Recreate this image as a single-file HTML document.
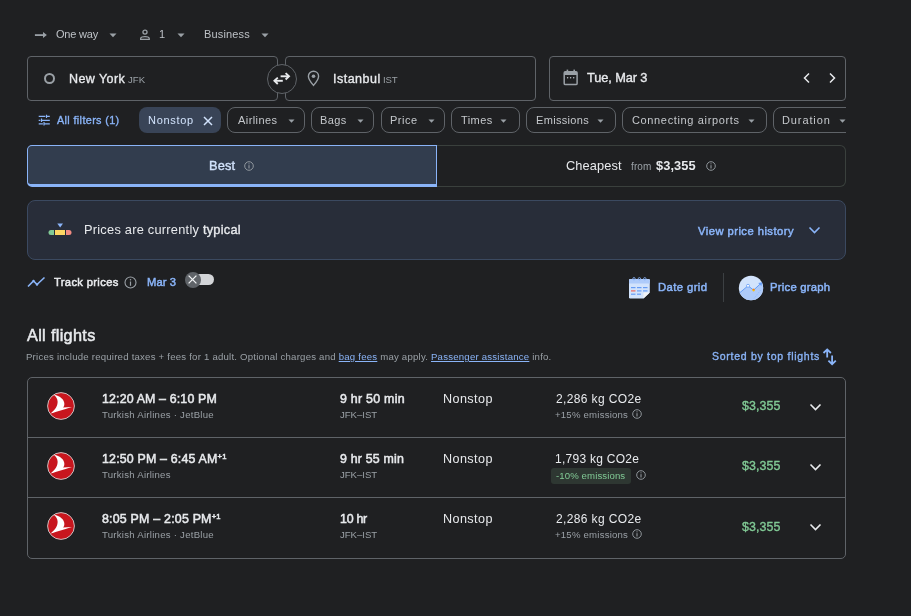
<!DOCTYPE html>
<html><head><meta charset="utf-8"><style>
html,body{margin:0;padding:0;background:#1f2022;width:911px;height:616px;overflow:hidden;}
body{position:relative;font-family:"Liberation Sans",sans-serif;}
.t{position:absolute;line-height:1;white-space:nowrap;will-change:transform;}
.b{position:absolute;}
b{font-weight:700;} .m{font-weight:400;-webkit-text-stroke:0.35px #e8eaed;}
.lk{color:#8ab4f8;text-decoration:underline;text-underline-offset:1px;}
.sp{font-size:0.62em;vertical-align:0;position:relative;top:-0.55em;}
</style></head><body>
<svg class="b" style="left:33px;top:30px" width="16" height="10" viewBox="0 0 16 10"><path d="M1.9 5.1H10.8" stroke="#9aa0a6" stroke-width="1.8"/><path d="M10 2.1L13.9 5.05L10 8Z" fill="#9aa0a6"/></svg>
<div class="t" style="left:55.70px;top:29px;font-size:11px;color:#bdc1c6;letter-spacing:-0.200px;">One way</div>
<svg class="b" style="left:109px;top:33px" width="8" height="5"><path d="M0.5 0.5H7.5L4 4.2Z" fill="#9aa0a6"/></svg>
<svg class="b" style="left:138px;top:28px" width="13" height="13" viewBox="0 0 13 13"><circle cx="7" cy="4.1" r="2.05" fill="none" stroke="#9aa0a6" stroke-width="1.3"/><path d="M2.65 11.45V10.5C2.65 9.3 5 8.65 6.95 8.65C8.9 8.65 11.25 9.3 11.25 10.5V11.45Z" fill="none" stroke="#9aa0a6" stroke-width="1.3"/></svg>
<div class="t" style="left:159.40px;top:29px;font-size:11px;color:#bdc1c6;">1</div>
<svg class="b" style="left:177px;top:33px" width="8" height="5"><path d="M0.5 0.5H7.5L4 4.2Z" fill="#9aa0a6"/></svg>
<div class="t" style="left:203.90px;top:29px;font-size:11px;color:#bdc1c6;letter-spacing:0.157px;">Business</div>
<svg class="b" style="left:261px;top:33px" width="8" height="5"><path d="M0.5 0.5H7.5L4 4.2Z" fill="#9aa0a6"/></svg>
<div class="b" style="left:27px;top:56px;width:251px;height:45px;border:1px solid #5f6368;border-radius:4px;box-sizing:border-box;"></div>
<div class="b" style="left:285px;top:56px;width:251px;height:45px;border:1px solid #5f6368;border-radius:4px;box-sizing:border-box;"></div>
<div class="b" style="left:549px;top:56px;width:297px;height:45px;border:1px solid #5f6368;border-radius:4px;box-sizing:border-box;"></div>
<div class="b" style="left:266.5px;top:64px;width:30px;height:30px;border:1px solid #5f6368;border-radius:50%;box-sizing:border-box;background:#1f2022;"></div>
<svg class="b" style="left:272px;top:70px" width="20" height="17" viewBox="0 0 20 17"><g fill="none" stroke="#e8eaed" stroke-width="1.9"><path d="M8.6 6.3H16.8"/><path d="M13.6 3.1L17 6.3L13.6 9.5"/><path d="M2.6 10.8H10.8"/><path d="M5.8 7.6L2.4 10.8L5.8 14"/></g></svg>
<div class="b" style="left:44px;top:73.1px;width:11px;height:11px;border:2px solid #9aa0a6;border-radius:50%;box-sizing:border-box;"></div>
<div class="t" style="left:68.70px;top:73px;font-size:12.5px;color:#e8eaed;-webkit-text-stroke:0.35px #e8eaed;letter-spacing:0.429px;">New York</div>
<div class="t" style="left:128.00px;top:75px;font-size:9.6px;color:#9aa0a6;letter-spacing:0.000px;">JFK</div>
<svg class="b" style="left:307px;top:70px" width="13" height="17" viewBox="0 0 13 17"><path d="M6.5 1.2C3.6 1.2 1.4 3.4 1.4 6.2C1.4 9.6 6.5 15.4 6.5 15.4C6.5 15.4 11.6 9.6 11.6 6.2C11.6 3.4 9.4 1.2 6.5 1.2Z" fill="none" stroke="#9aa0a6" stroke-width="1.4"/><circle cx="6.5" cy="6.2" r="1.8" fill="#9aa0a6"/></svg>
<div class="t" style="left:332.50px;top:73px;font-size:12.5px;color:#e8eaed;-webkit-text-stroke:0.35px #e8eaed;letter-spacing:0.486px;">Istanbul</div>
<div class="t" style="left:382.70px;top:75px;font-size:9.6px;color:#9aa0a6;letter-spacing:-0.100px;">IST</div>
<svg class="b" style="left:563px;top:69px" width="16" height="17" viewBox="0 0 16 17"><rect x="1.2" y="2.8" width="12.9" height="12.8" rx="1.2" fill="none" stroke="#9aa0a6" stroke-width="1.5"/><rect x="1.2" y="2.8" width="12.9" height="3.2" fill="#9aa0a6"/><rect x="3.6" y="0.6" width="1.6" height="3" fill="#9aa0a6"/><rect x="10.4" y="0.6" width="1.6" height="3" fill="#9aa0a6"/><circle cx="4.6" cy="8.8" r="0.75" fill="#bdc1c6"/><circle cx="7.65" cy="8.8" r="0.75" fill="#bdc1c6"/><circle cx="10.7" cy="8.8" r="0.75" fill="#bdc1c6"/></svg>
<div class="t" style="left:587.40px;top:72px;font-size:12.8px;color:#e8eaed;-webkit-text-stroke:0.35px #e8eaed;letter-spacing:-0.111px;">Tue, Mar 3</div>
<svg class="b" style="left:802px;top:72px" width="9" height="12" viewBox="0 0 9 12"><path d="M7 1.5L2.5 6L7 10.5" fill="none" stroke="#e8eaed" stroke-width="1.5"/></svg>
<svg class="b" style="left:828px;top:72px" width="9" height="12" viewBox="0 0 9 12"><path d="M2 1.5L6.5 6L2 10.5" fill="none" stroke="#e8eaed" stroke-width="1.5"/></svg>
<svg class="b" style="left:38px;top:114px" width="13" height="12" viewBox="0 0 13 12"><g stroke="#8ab4f8" stroke-width="1.15" fill="none"><path d="M0.7 2.4H7.4M8.5 2.4H11.8M0.7 6.3H2.4M3.5 6.3H11.8M0.7 9.8H4.9M6 9.8H11.8"/><path d="M8.5 0.7V4.1M3.5 4.6V8M6 8.1V11.5"/></g></svg>
<div class="t" style="left:57.40px;top:115px;font-size:10.8px;color:#8ab4f8;-webkit-text-stroke:0.35px #8ab4f8;letter-spacing:0.371px;">All filters (1)</div>
<div class="b" style="left:139px;top:107px;width:82px;height:26px;background:#394457;border-radius:8px;"></div>
<div class="t" style="left:147.90px;top:115px;font-size:11px;color:#d2e3fc;letter-spacing:0.683px;">Nonstop</div>
<svg class="b" style="left:203px;top:115.5px" width="10" height="10" viewBox="0 0 10 10"><path d="M1 1L9 9M9 1L1 9" stroke="#d2e3fc" stroke-width="1.5"/></svg>
<div class="b" style="left:0;top:0;width:846px;height:140px;overflow:hidden">
<div class="b" style="left:227px;top:107px;width:78px;height:25.5px;border:1px solid #5f6368;border-radius:8px;box-sizing:border-box;"></div>
<div class="t" style="left:237.60px;top:115px;font-size:11px;color:#c5c8cc;letter-spacing:0.429px;">Airlines</div>
<svg class="b" style="left:288.2px;top:119px" width="8" height="5"><path d="M0.5 0.5H6.5L3.5 3.8Z" fill="#9aa0a6"/></svg>
<div class="b" style="left:311px;top:107px;width:63px;height:25.5px;border:1px solid #5f6368;border-radius:8px;box-sizing:border-box;"></div>
<div class="t" style="left:320.00px;top:115px;font-size:11px;color:#c5c8cc;letter-spacing:0.400px;">Bags</div>
<svg class="b" style="left:357px;top:119px" width="8" height="5"><path d="M0.5 0.5H6.5L3.5 3.8Z" fill="#9aa0a6"/></svg>
<div class="b" style="left:380.5px;top:107px;width:64.0px;height:25.5px;border:1px solid #5f6368;border-radius:8px;box-sizing:border-box;"></div>
<div class="t" style="left:389.70px;top:115px;font-size:11px;color:#c5c8cc;letter-spacing:0.525px;">Price</div>
<svg class="b" style="left:427.5px;top:119px" width="8" height="5"><path d="M0.5 0.5H6.5L3.5 3.8Z" fill="#9aa0a6"/></svg>
<div class="b" style="left:451px;top:107px;width:68.5px;height:25.5px;border:1px solid #5f6368;border-radius:8px;box-sizing:border-box;"></div>
<div class="t" style="left:460.90px;top:115px;font-size:11px;color:#c5c8cc;letter-spacing:0.425px;">Times</div>
<svg class="b" style="left:500px;top:119px" width="8" height="5"><path d="M0.5 0.5H6.5L3.5 3.8Z" fill="#9aa0a6"/></svg>
<div class="b" style="left:526px;top:107px;width:89.60000000000002px;height:25.5px;border:1px solid #5f6368;border-radius:8px;box-sizing:border-box;"></div>
<div class="t" style="left:535.60px;top:115px;font-size:11px;color:#c5c8cc;letter-spacing:0.325px;">Emissions</div>
<svg class="b" style="left:597px;top:119px" width="8" height="5"><path d="M0.5 0.5H6.5L3.5 3.8Z" fill="#9aa0a6"/></svg>
<div class="b" style="left:622.4px;top:107px;width:144.30000000000007px;height:25.5px;border:1px solid #5f6368;border-radius:8px;box-sizing:border-box;"></div>
<div class="t" style="left:632.40px;top:115px;font-size:11px;color:#c5c8cc;letter-spacing:0.644px;">Connecting airports</div>
<svg class="b" style="left:748px;top:119px" width="8" height="5"><path d="M0.5 0.5H6.5L3.5 3.8Z" fill="#9aa0a6"/></svg>
<div class="b" style="left:773.3px;top:107px;width:86.70000000000005px;height:25.5px;border:1px solid #5f6368;border-radius:8px;box-sizing:border-box;"></div>
<div class="t" style="left:781.50px;top:115px;font-size:11px;color:#c5c8cc;letter-spacing:0.886px;">Duration</div>
<svg class="b" style="left:839px;top:119px" width="8" height="5"><path d="M0.5 0.5H6.5L3.5 3.8Z" fill="#9aa0a6"/></svg>
</div>
<div class="b" style="left:437px;top:145px;width:409px;height:41.5px;border:1px solid #3a403d;border-left:none;border-radius:0 6px 6px 0;box-sizing:border-box;"></div>
<div class="b" style="left:27px;top:145px;width:410px;height:42px;border:1px solid #8ab4f8;border-bottom:3px solid #8ab4f8;border-radius:5px 0 0 5px;box-sizing:border-box;background:#323d4e;"></div>
<div class="t" style="left:208.60px;top:160px;font-size:12.8px;color:#d2e3fc;-webkit-text-stroke:0.35px #d2e3fc;letter-spacing:0.133px;">Best</div>
<svg class="b" style="left:243.5px;top:160.5px" width="10" height="10" viewBox="0 0 10 10"><circle cx="5" cy="5" r="4.3" fill="none" stroke="#9aa0a6" stroke-width="0.9"/><path d="M5 4.2V7.5" stroke="#9aa0a6" stroke-width="1"/><circle cx="5" cy="2.8" r="0.6" fill="#9aa0a6"/></svg>
<div class="t" style="left:566.20px;top:160px;font-size:12.8px;color:#e8eaed;letter-spacing:0.100px;">Cheapest</div>
<div class="t" style="left:630.70px;top:162px;font-size:10px;color:#9aa0a6;letter-spacing:0.100px;">from</div>
<div class="t" style="left:655.80px;top:160px;font-size:12.8px;color:#e8eaed;font-weight:700;letter-spacing:0.100px;">$3,355</div>
<svg class="b" style="left:705.5px;top:160.5px" width="10" height="10" viewBox="0 0 10 10"><circle cx="5" cy="5" r="4.3" fill="none" stroke="#9aa0a6" stroke-width="0.9"/><path d="M5 4.2V7.5" stroke="#9aa0a6" stroke-width="1"/><circle cx="5" cy="2.8" r="0.6" fill="#9aa0a6"/></svg>
<div class="b" style="left:27px;top:200px;width:819px;height:60px;border:1px solid #3b4960;border-radius:8px;box-sizing:border-box;background:#282d39;"></div>
<svg class="b" style="left:48px;top:223px" width="24" height="13" viewBox="0 0 24 13"><path d="M9.3 0.4H15L12.15 4.6Z" fill="#8ab4f8"/><path d="M3 7H6V12H3A2.5 2.5 0 0 1 3 7Z" fill="#81c995"/><rect x="7" y="7" width="10" height="5" fill="#fdd663"/><path d="M18 7H21A2.5 2.5 0 0 1 21 12H18Z" fill="#f28b82"/></svg>
<div class="t" style="left:84.30px;top:224px;font-size:12.8px;color:#e8eaed;letter-spacing:0.244px;">Prices are currently <b class=m>typical</b></div>
<div class="t" style="left:697.80px;top:226px;font-size:11.2px;color:#8ab4f8;-webkit-text-stroke:0.5px #8ab4f8;letter-spacing:0.471px;">View price history</div>
<svg class="b" style="left:808px;top:226px" width="13" height="9" viewBox="0 0 13 9"><path d="M1.5 1.5L6.5 6.5L11.5 1.5" fill="none" stroke="#8ab4f8" stroke-width="1.6"/></svg>
<svg class="b" style="left:27px;top:276px" width="19" height="12" viewBox="0 0 19 12"><path d="M1 10.5L6.5 5L10 8.5L17.5 1.5" fill="none" stroke="#8ab4f8" stroke-width="1.6"/><circle cx="6.5" cy="5" r="1.2" fill="#8ab4f8"/><circle cx="10" cy="8.5" r="1.2" fill="#8ab4f8"/></svg>
<div class="t" style="left:54.00px;top:277px;font-size:11.2px;color:#e8eaed;-webkit-text-stroke:0.5px #e8eaed;letter-spacing:0.345px;">Track prices</div>
<svg class="b" style="left:124px;top:276px" width="13" height="13" viewBox="0 0 13 13"><circle cx="6.5" cy="6.5" r="5.5" fill="none" stroke="#9aa0a6" stroke-width="1.1"/><path d="M6.5 5.5V9.8" stroke="#9aa0a6" stroke-width="1.2"/><circle cx="6.5" cy="3.7" r="0.75" fill="#9aa0a6"/></svg>
<div class="t" style="left:146.90px;top:277px;font-size:11.2px;color:#8ab4f8;-webkit-text-stroke:0.5px #8ab4f8;letter-spacing:0.100px;">Mar 3</div>
<div class="b" style="left:188px;top:273.8px;width:26px;height:11.4px;background:#d3d5d8;border-radius:5.7px;"></div>
<div class="b" style="left:184.7px;top:271.6px;width:16px;height:16px;background:#5f6368;border-radius:50%;"></div>
<svg class="b" style="left:188.2px;top:275.1px" width="9" height="9" viewBox="0 0 9 9"><path d="M0.6 0.6L8.4 8.4M8.4 0.6L0.6 8.4" stroke="#f1f3f4" stroke-width="1.3"/></svg>
<svg class="b" style="left:628px;top:277px" width="23" height="22" viewBox="0 0 23 22"><path d="M1 3.2Q1 2 2.2 2H20.6Q21.8 2 21.8 3.2V15.5L15.5 21.4H2.2Q1 21.4 1 20.2Z" fill="#d2e3fc"/><path d="M1 3.2Q1 2 2.2 2H20.6Q21.8 2 21.8 3.2V6.5H1Z" fill="#aecbfa"/><g fill="none" stroke="#8ab4f8" stroke-width="0.9"><circle cx="6" cy="1.8" r="1.2"/><circle cx="11.4" cy="1.8" r="1.2"/><circle cx="16.8" cy="1.8" r="1.2"/></g><g fill="#669df6"><rect x="3" y="10" width="4.5" height="1.2"/><rect x="9" y="10" width="4.5" height="1.2"/><rect x="15" y="10" width="4.5" height="1.2"/><rect x="9" y="13.3" width="4.5" height="1.2"/><rect x="15" y="13.3" width="4.5" height="1.2"/><rect x="3" y="16.6" width="4.5" height="1.2"/><rect x="9" y="16.6" width="4" height="1.2"/></g><rect x="3" y="13.3" width="4.5" height="1.2" fill="#ee675c"/><path d="M15.5 21.4V16.5Q15.5 15.5 16.5 15.5H21.8Z" fill="#f1f3f4"/></svg>
<div class="t" style="left:657.60px;top:282px;font-size:11.3px;color:#8ab4f8;-webkit-text-stroke:0.5px #8ab4f8;letter-spacing:0.400px;">Date grid</div>
<div class="b" style="left:723px;top:273px;width:1px;height:29px;background:#3c4043;"></div>
<svg class="b" style="left:738px;top:275px" width="26" height="26" viewBox="0 0 26 26"><defs><clipPath id="cc"><circle cx="13" cy="13" r="12.2"/></clipPath></defs><circle cx="13" cy="13" r="12.2" fill="#d2e3fc"/><g clip-path="url(#cc)"><path d="M0 19.3L10 10.8L15.6 15.1L22.5 8.8L26 8V26H0Z" fill="#aecbfa"/><path d="M0.3 19L10 10.8L15.6 15.1L22.2 9" fill="none" stroke="#669df6" stroke-width="1"/><path d="M16 23.5L23.5 14" fill="none" stroke="#8ab4f8" stroke-width="0.8" stroke-dasharray="1.2 1.2"/></g><path d="M24.2 7.2L20.2 7.9L23.4 11.1Z" fill="#669df6"/><circle cx="10" cy="10.8" r="1.5" fill="#fff" stroke="#669df6" stroke-width="0.8"/><circle cx="15.6" cy="15.1" r="1.3" fill="#fbbc04"/><path d="M14.4 14.6A1.3 1.3 0 0 1 16.8 14.6Z" fill="#ea4335"/></svg>
<div class="t" style="left:769.80px;top:282px;font-size:11.3px;color:#8ab4f8;-webkit-text-stroke:0.5px #8ab4f8;letter-spacing:0.230px;">Price graph</div>
<div class="t" style="left:27.30px;top:327px;font-size:16.3px;color:#e8eaed;-webkit-text-stroke:0.5px #e8eaed;letter-spacing:0.320px;">All flights</div>
<div class="t" style="left:26.40px;top:352px;font-size:9.6px;color:#9aa0a6;letter-spacing:0.224px;">Prices include required taxes + fees for 1 adult. Optional charges and <u class="lk">bag fees</u> may apply. <u class="lk">Passenger assistance</u> info.</div>
<div class="t" style="left:711.90px;top:351px;font-size:10.5px;color:#8ab4f8;-webkit-text-stroke:0.35px #8ab4f8;letter-spacing:0.725px;">Sorted by top flights</div>
<svg class="b" style="left:822px;top:348px" width="16" height="18" viewBox="0 0 16 18"><g fill="none" stroke="#8ab4f8" stroke-width="1.8"><path d="M5.2 9.6V1.8M1.5 5L5.2 1.4L8.9 5"/><path d="M10.1 7.4V15.6M6.4 12.6L10.1 16.2L13.8 12.6"/></g></svg>
<div class="b" style="left:27px;top:377px;width:819px;height:181.5px;border:1px solid #5f6368;border-radius:5px;box-sizing:border-box;"></div>
<div class="b" style="left:28px;top:437px;width:817px;height:1px;background:#5f6368;"></div>
<div class="b" style="left:28px;top:497.3px;width:817px;height:1px;background:#5f6368;"></div>
<svg class="b" style="left:47px;top:392.1px" width="28" height="28" viewBox="0 0 28 28"><circle cx="14" cy="14" r="13.4" fill="#c8161e" stroke="#d0d0d0" stroke-width="0.9"/><path d="M6.5 2.6C11 3.5 16 6 17.2 10.4C17.6 12.5 17.3 14.2 16.1 15.6C19 15.2 22 15 25 15C21 16.3 15 18 9.3 19.7C7.4 20.3 5.5 20.9 3.6 21.5C9 17 10.8 13 10.6 9.5C10.5 6.8 9 4.5 6.5 2.6Z" fill="#ffffff"/></svg>
<div class="t" style="left:101.90px;top:393px;font-size:12.4px;color:#e8eaed;-webkit-text-stroke:0.5px #e8eaed;letter-spacing:0.147px;">12:20 AM – 6:10 PM</div>
<div class="t" style="left:101.90px;top:410px;font-size:9.6px;color:#9aa0a6;letter-spacing:0.256px;">Turkish Airlines · JetBlue</div>
<div class="t" style="left:339.70px;top:393px;font-size:12.4px;color:#e8eaed;-webkit-text-stroke:0.5px #e8eaed;letter-spacing:0.260px;">9 hr 50 min</div>
<div class="t" style="left:339.70px;top:410px;font-size:9.6px;color:#9aa0a6;letter-spacing:-0.017px;">JFK–IST</div>
<div class="t" style="left:442.80px;top:393px;font-size:12.6px;color:#e8eaed;letter-spacing:0.417px;">Nonstop</div>
<div class="t" style="left:555.50px;top:393px;font-size:12px;color:#e8eaed;letter-spacing:0.367px;">2,286 kg CO2e</div>
<div class="t" style="left:554.50px;top:410px;font-size:9.6px;color:#9aa0a6;letter-spacing:0.215px;">+15% emissions</div>
<svg class="b" style="left:631.8px;top:408.5px" width="10" height="10" viewBox="0 0 10 10"><circle cx="5" cy="5" r="4.3" fill="none" stroke="#9aa0a6" stroke-width="0.9"/><path d="M5 4.2V7.5" stroke="#9aa0a6" stroke-width="1"/><circle cx="5" cy="2.8" r="0.6" fill="#9aa0a6"/></svg>
<div class="t" style="left:741.90px;top:400px;font-size:12.4px;color:#81c995;-webkit-text-stroke:0.35px #81c995;letter-spacing:0.120px;">$3,355</div>
<svg class="b" style="left:809px;top:402.5px" width="13" height="9" viewBox="0 0 13 9"><path d="M1.5 1.5L6.5 6.5L11.5 1.5" fill="none" stroke="#e8eaed" stroke-width="1.6"/></svg>
<svg class="b" style="left:47px;top:452.1px" width="28" height="28" viewBox="0 0 28 28"><circle cx="14" cy="14" r="13.4" fill="#c8161e" stroke="#d0d0d0" stroke-width="0.9"/><path d="M6.5 2.6C11 3.5 16 6 17.2 10.4C17.6 12.5 17.3 14.2 16.1 15.6C19 15.2 22 15 25 15C21 16.3 15 18 9.3 19.7C7.4 20.3 5.5 20.9 3.6 21.5C9 17 10.8 13 10.6 9.5C10.5 6.8 9 4.5 6.5 2.6Z" fill="#ffffff"/></svg>
<div class="t" style="left:101.90px;top:453px;font-size:12.4px;color:#e8eaed;-webkit-text-stroke:0.5px #e8eaed;letter-spacing:0.179px;">12:50 PM – 6:45 AM<sup class="sp">+1</sup></div>
<div class="t" style="left:101.90px;top:470px;font-size:9.6px;color:#9aa0a6;letter-spacing:0.253px;">Turkish Airlines</div>
<div class="t" style="left:339.70px;top:453px;font-size:12.4px;color:#e8eaed;-webkit-text-stroke:0.5px #e8eaed;letter-spacing:0.180px;">9 hr 55 min</div>
<div class="t" style="left:339.70px;top:470px;font-size:9.6px;color:#9aa0a6;letter-spacing:-0.017px;">JFK–IST</div>
<div class="t" style="left:442.80px;top:453px;font-size:12.6px;color:#e8eaed;letter-spacing:0.417px;">Nonstop</div>
<div class="t" style="left:554.50px;top:453px;font-size:12px;color:#e8eaed;letter-spacing:0.267px;">1,793 kg CO2e</div>
<div class="b" style="left:551px;top:468px;width:80px;height:16px;background:#2e3732;border-radius:3px;"></div>
<div class="t" style="left:556.20px;top:471px;font-size:9.6px;color:#81c995;letter-spacing:0.108px;">-10% emissions</div>
<svg class="b" style="left:635.5px;top:469.5px" width="10" height="10" viewBox="0 0 10 10"><circle cx="5" cy="5" r="4.3" fill="none" stroke="#9aa0a6" stroke-width="0.9"/><path d="M5 4.2V7.5" stroke="#9aa0a6" stroke-width="1"/><circle cx="5" cy="2.8" r="0.6" fill="#9aa0a6"/></svg>
<div class="t" style="left:741.90px;top:460px;font-size:12.4px;color:#81c995;-webkit-text-stroke:0.35px #81c995;letter-spacing:0.120px;">$3,355</div>
<svg class="b" style="left:809px;top:462.5px" width="13" height="9" viewBox="0 0 13 9"><path d="M1.5 1.5L6.5 6.5L11.5 1.5" fill="none" stroke="#e8eaed" stroke-width="1.6"/></svg>
<svg class="b" style="left:47px;top:512.1px" width="28" height="28" viewBox="0 0 28 28"><circle cx="14" cy="14" r="13.4" fill="#c8161e" stroke="#d0d0d0" stroke-width="0.9"/><path d="M6.5 2.6C11 3.5 16 6 17.2 10.4C17.6 12.5 17.3 14.2 16.1 15.6C19 15.2 22 15 25 15C21 16.3 15 18 9.3 19.7C7.4 20.3 5.5 20.9 3.6 21.5C9 17 10.8 13 10.6 9.5C10.5 6.8 9 4.5 6.5 2.6Z" fill="#ffffff"/></svg>
<div class="t" style="left:101.90px;top:513px;font-size:12.4px;color:#e8eaed;-webkit-text-stroke:0.5px #e8eaed;letter-spacing:0.211px;">8:05 PM – 2:05 PM<sup class="sp">+1</sup></div>
<div class="t" style="left:101.90px;top:530px;font-size:9.6px;color:#9aa0a6;letter-spacing:0.256px;">Turkish Airlines · JetBlue</div>
<div class="t" style="left:339.70px;top:513px;font-size:12.4px;color:#e8eaed;-webkit-text-stroke:0.5px #e8eaed;letter-spacing:-0.250px;">10 hr</div>
<div class="t" style="left:339.70px;top:530px;font-size:9.6px;color:#9aa0a6;letter-spacing:-0.017px;">JFK–IST</div>
<div class="t" style="left:442.80px;top:513px;font-size:12.6px;color:#e8eaed;letter-spacing:0.417px;">Nonstop</div>
<div class="t" style="left:555.50px;top:513px;font-size:12px;color:#e8eaed;letter-spacing:0.367px;">2,286 kg CO2e</div>
<div class="t" style="left:554.50px;top:530px;font-size:9.6px;color:#9aa0a6;letter-spacing:0.215px;">+15% emissions</div>
<svg class="b" style="left:631.8px;top:528.5px" width="10" height="10" viewBox="0 0 10 10"><circle cx="5" cy="5" r="4.3" fill="none" stroke="#9aa0a6" stroke-width="0.9"/><path d="M5 4.2V7.5" stroke="#9aa0a6" stroke-width="1"/><circle cx="5" cy="2.8" r="0.6" fill="#9aa0a6"/></svg>
<div class="t" style="left:741.90px;top:521px;font-size:12.4px;color:#81c995;-webkit-text-stroke:0.35px #81c995;letter-spacing:0.120px;">$3,355</div>
<svg class="b" style="left:809px;top:522.5px" width="13" height="9" viewBox="0 0 13 9"><path d="M1.5 1.5L6.5 6.5L11.5 1.5" fill="none" stroke="#e8eaed" stroke-width="1.6"/></svg>

</body></html>
